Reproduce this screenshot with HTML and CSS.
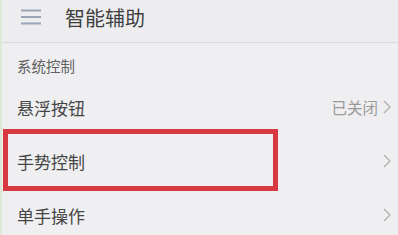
FILE: index.html
```html
<!DOCTYPE html>
<html lang="zh-CN">
<head>
  <meta charset="UTF-8">
  <meta name="viewport" content="width=device-width, initial-scale=1.0">
  <title>智能辅助</title>
  <link rel="stylesheet" href="styles.css">
</head>
<body>
  <div class="screen">
    <!-- Header -->
    <div class="header">
      <svg class="menu-icon" width="20" height="16" viewBox="0 0 20 16">
        <path d="M0 1.5h20M0 8h20M0 14.5h20" stroke="#9aa6b6" stroke-width="2" fill="none"/>
      </svg>
      <h1 class="title">智能辅助</h1>
    </div>

    <!-- Settings list -->
    <div class="section-label">系统控制</div>

    <div class="row">
      <span class="row-title">悬浮按钮</span>
      <span class="row-extra">
        <span class="row-value">已关闭</span>
        <svg class="chevron" width="8" height="14" viewBox="0 0 8 14">
          <path d="M1 1l6 6-6 6" stroke="#b0b0b0" stroke-width="1.3" fill="none"/>
        </svg>
      </span>
    </div>

    <div class="row">
      <span class="row-title">手势控制</span>
      <svg class="chevron" width="8" height="14" viewBox="0 0 8 14">
        <path d="M1 1l6 6-6 6" stroke="#b0b0b0" stroke-width="1.3" fill="none"/>
      </svg>
      <div class="highlight"></div>
    </div>

    <div class="row">
      <span class="row-title">单手操作</span>
      <svg class="chevron" width="8" height="14" viewBox="0 0 8 14">
        <path d="M1 1l6 6-6 6" stroke="#b0b0b0" stroke-width="1.3" fill="none"/>
      </svg>
    </div>
  </div>
</body>
</html>
```

FILE: styles.css
```css
* {
  margin: 0;
  padding: 0;
  box-sizing: border-box;
}

body {
  font-family: "Noto Sans CJK SC", "Noto Sans", sans-serif;
  background-color: #efeff1;
  color: #404040;
  overflow: hidden;
}

.screen {
  width: 398px;
  height: 235px;
  border-left: 2px solid #dbe9d6;
}

.header {
  display: flex;
  align-items: center;
  height: 43px;
  padding-left: 19px;
  border-bottom: 1px solid #d9d9db;
  background-color: #ededef;
}

.menu-icon {
  margin-right: 24px;
  margin-top: -8px;
}

.title {
  font-size: 20px;
  font-weight: normal;
  color: #3f3f3f;
  margin-top: -8px;
}

.section-label {
  height: 37px;
  padding: 13px 0 0 15px;
  font-size: 14.5px;
  line-height: 20px;
  color: #5f5f5f;
}

.row {
  position: relative;
  display: flex;
  justify-content: space-between;
  align-items: center;
  height: 54px;
  padding: 0 7px 0 15px;
}

.row-title {
  font-size: 17px;
  color: #454545;
}

.row-extra {
  display: flex;
  align-items: center;
  gap: 5px;
}

.row-value {
  font-size: 15.5px;
  color: #9a9a9a;
}

.chevron {
  display: block;
}

/* red annotation box over the gesture row */
.highlight {
  position: absolute;
  left: 1px;
  top: -5px;
  width: 275px;
  height: 62px;
  border: 5px solid #d63a40;
}
```
